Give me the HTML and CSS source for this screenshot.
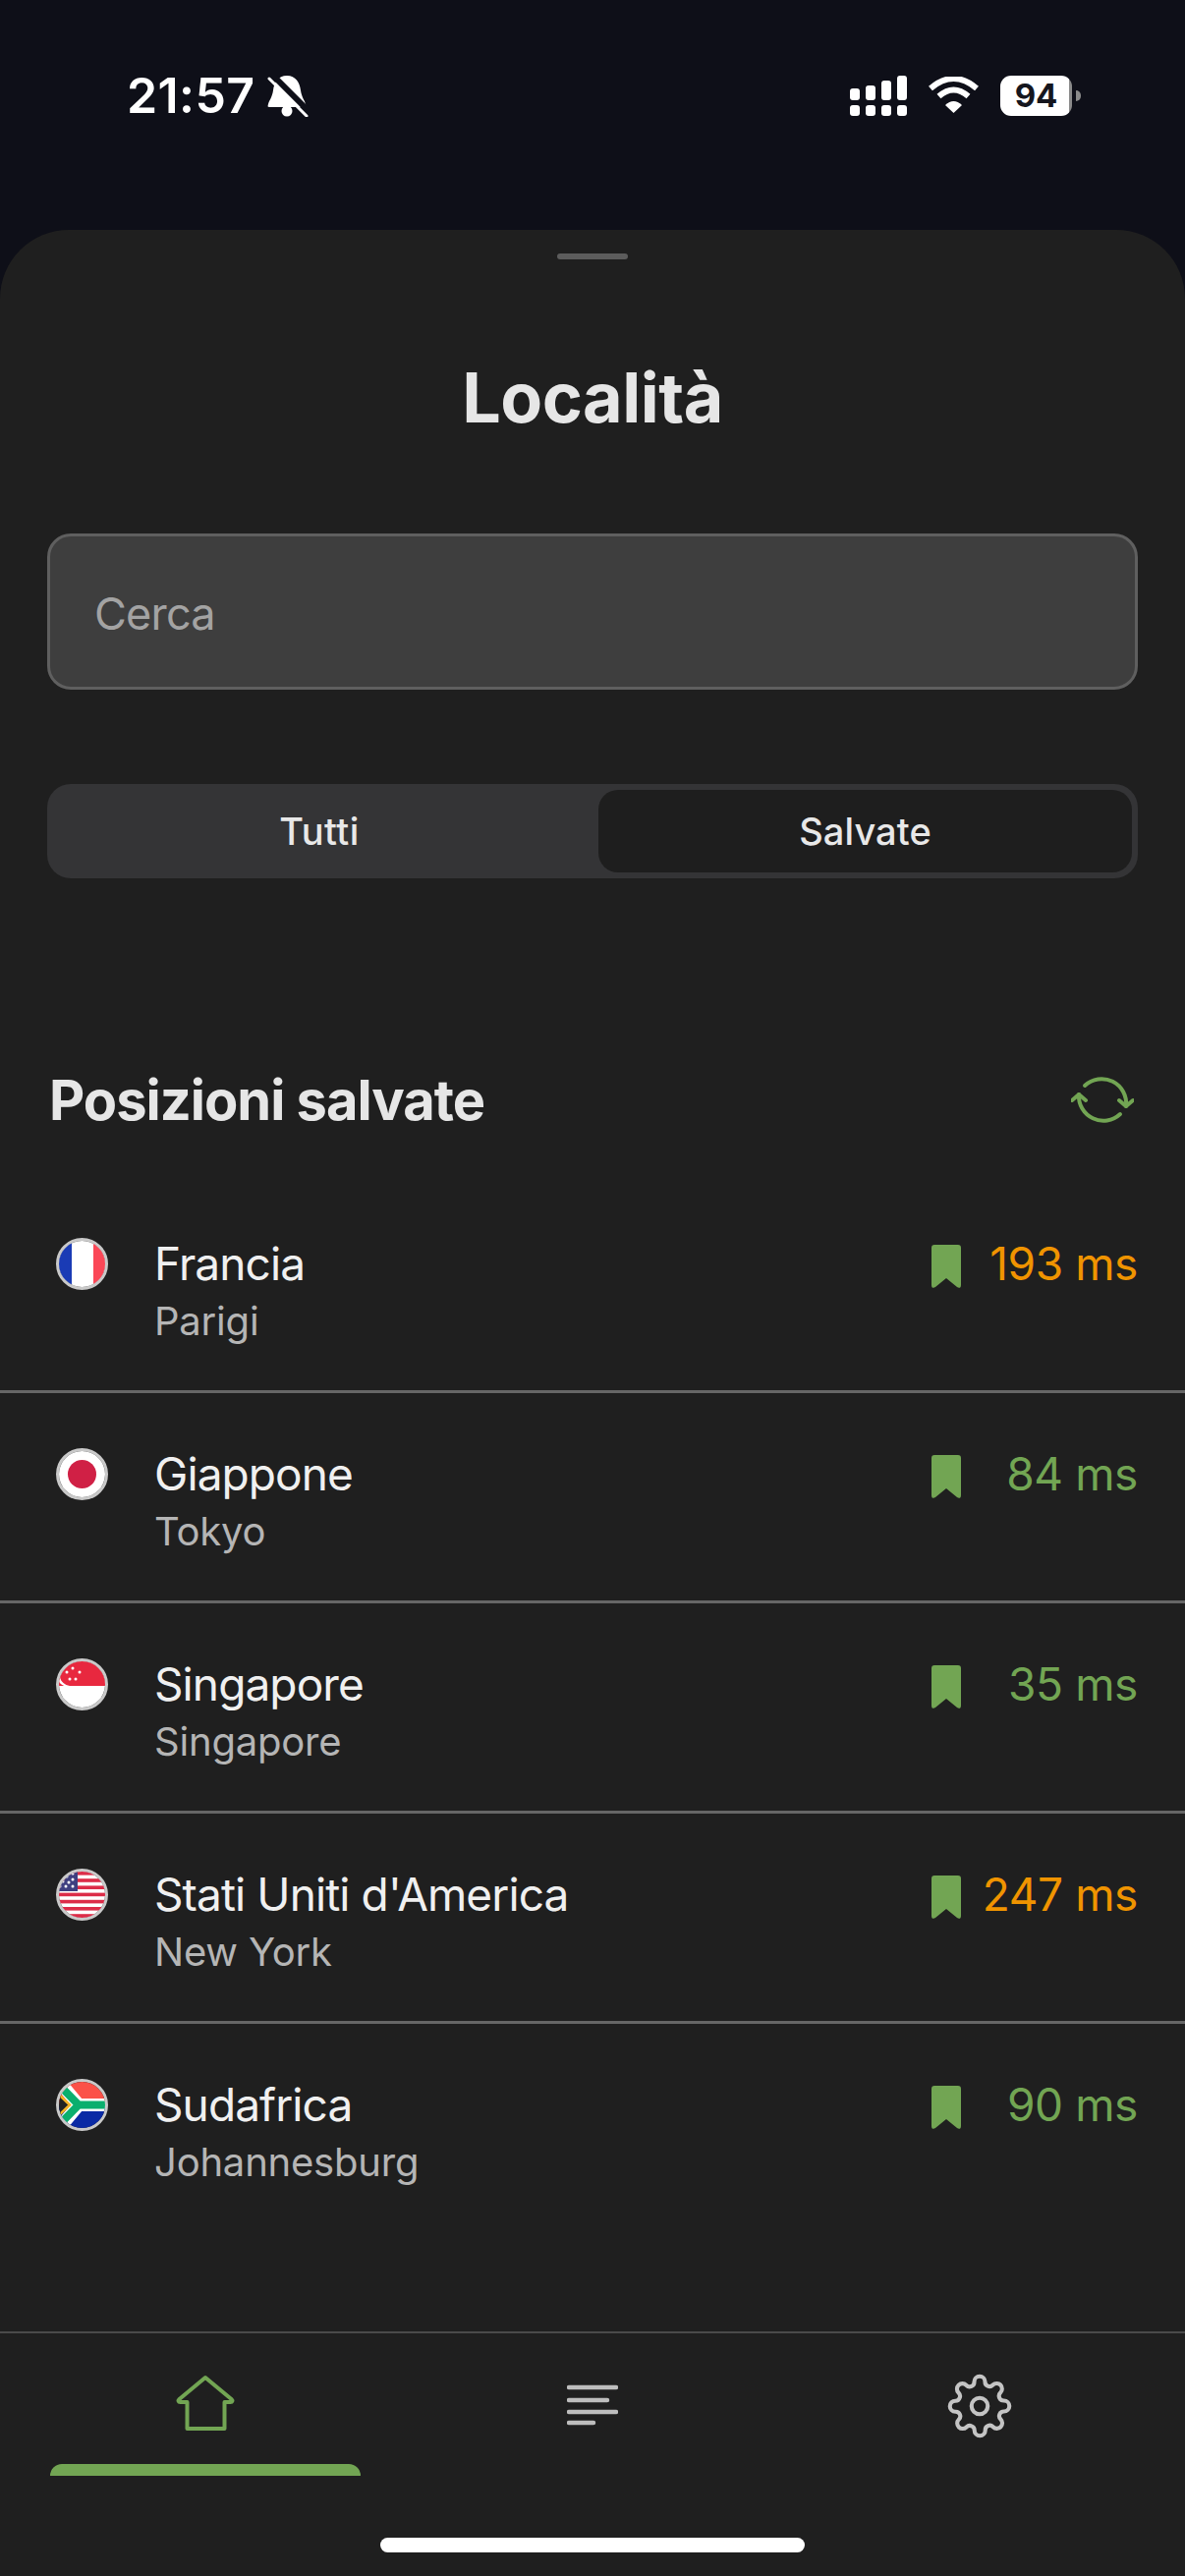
FILE: index.html
```html
<!DOCTYPE html>
<html lang="it">
  <head>
    <meta charset="UTF-8" />
    <title>Località</title>
    <link rel="stylesheet" href="styles.css">
  </head>
  <body>
    <div class="statusBar">
      <div class="statusLeft">
        <span class="time">21:57</span>
        <svg class="bell" viewBox="172 26 42 43">
          <path fill="#fff" d="M192 27c-9 0-13 7-14 15-1 7-4 10-5 14-1 3 0 3 2 3h34c3 0 3 0 2-3-1-4-4-7-5-14-1-8-5-15-14-15z" />
          <circle cx="192" cy="63" r="5.5" fill="#fff" />
          <path stroke="#0e0f18" stroke-width="6" d="M176 25l41 41" />
          <path stroke="#fff" stroke-width="3" stroke-linecap="round" d="M174 30l38 38" />
        </svg>
      </div>
      <div class="statusRight">
        <svg class="signal" viewBox="0 0 58 41" fill="#fff">
          <rect x="0" y="13" width="10" height="12" rx="3" />
          <rect x="16" y="10" width="10" height="15" rx="3" />
          <rect x="32" y="5" width="10" height="20" rx="3" />
          <rect x="48" y="0" width="10" height="25" rx="3" />
          <rect x="0" y="30" width="10" height="11" rx="3" />
          <rect x="16" y="30" width="10" height="11" rx="3" />
          <rect x="32" y="30" width="10" height="11" rx="3" />
          <rect x="48" y="30" width="10" height="11" rx="3" />
        </svg>
        <svg class="wifi" viewBox="105 29 52 38">
          <path fill="none" stroke="#fff" stroke-width="6" d="M107 41Q130.5 21 154 41" />
          <path fill="none" stroke="#fff" stroke-width="6" d="M115.500 49Q130.500 36 145.500 49" />
          <path fill="#fff" d="M122 58Q130.500 50 139 58L130.500 66z" />
        </svg>
        <div class="battery">94</div>
      </div>
    </div>

    <section class="sheet">
      <div class="handle"></div>
      <h1 class="title">Località</h1>
      <div class="search">Cerca</div>
      <div class="segment">
        <div class="segItem">Tutti</div>
        <div class="segItem active">Salvate</div>
      </div>

      <div class="listHead">
        <h2>Posizioni salvate</h2>
        <svg class="refresh" viewBox="30 17 64 64" fill="none" stroke="#72a553" stroke-width="4" stroke-linecap="round" stroke-linejoin="round">
          <path d="M44 34A25 25 0 0 1 86 55" />
          <path d="M79 49L86 55L93 49" />
          <path d="M80 63A25 25 0 0 1 38 43" />
          <path d="M31 49L38 43L45 49" />
        </svg>
      </div>

      <div class="list">
        <div class="row">
          <div class="flag">
            <svg viewBox="0 0 47 47">
              <rect width="47" height="47" fill="#fff" />
              <rect width="13" height="47" fill="#1a3bb5" />
              <rect x="35" width="12" height="47" fill="#fb4757" />
            </svg>
          </div>
          <div class="place">
            <div class="country">Francia</div>
            <div class="city">Parigi</div>
          </div>
          <div class="ping">
            <svg class="mark" viewBox="0 0 30 44"><path d="M3 0h24a3 3 0 0 1 3 3v38c0 3-2 3.500-4 2L15 34 4 43c-2 1.500-4 1-4-2V3a3 3 0 0 1 3-3z" /></svg>
            <span class="ms slow">193 ms</span>
          </div>
        </div>

        <div class="row">
          <div class="flag">
            <svg viewBox="0 0 47 47">
              <rect width="47" height="47" fill="#fff" />
              <circle cx="23.500" cy="23.500" r="14.500" fill="#d02045" />
            </svg>
          </div>
          <div class="place">
            <div class="country">Giappone</div>
            <div class="city">Tokyo</div>
          </div>
          <div class="ping">
            <svg class="mark" viewBox="0 0 30 44"><path d="M3 0h24a3 3 0 0 1 3 3v38c0 3-2 3.500-4 2L15 34 4 43c-2 1.500-4 1-4-2V3a3 3 0 0 1 3-3z" /></svg>
            <span class="ms">84 ms</span>
          </div>
        </div>

        <div class="row">
          <div class="flag">
            <svg viewBox="0 0 47 47">
              <rect width="47" height="47" fill="#fff" />
              <rect width="47" height="25" fill="#e8283f" />
              <path fill="#fff" d="M1 16c1 5 5 8 10 9-5 1-10-1-11-5z" />
              <g fill="#fff">
                <circle cx="8" cy="11" r="1.500" />
                <circle cx="14" cy="7" r="1.500" />
                <circle cx="21" cy="11" r="1.500" />
                <circle cx="11" cy="18" r="1.500" />
                <circle cx="17" cy="18" r="1.500" />
              </g>
            </svg>
          </div>
          <div class="place">
            <div class="country">Singapore</div>
            <div class="city">Singapore</div>
          </div>
          <div class="ping">
            <svg class="mark" viewBox="0 0 30 44"><path d="M3 0h24a3 3 0 0 1 3 3v38c0 3-2 3.500-4 2L15 34 4 43c-2 1.500-4 1-4-2V3a3 3 0 0 1 3-3z" /></svg>
            <span class="ms">35 ms</span>
          </div>
        </div>

        <div class="row">
          <div class="flag">
            <svg viewBox="0 0 47 47">
              <rect width="47" height="47" fill="#fff" />
              <g fill="#dc2c48">
                <rect y="0" width="47" height="3.600" />
                <rect y="7.200" width="47" height="3.600" />
                <rect y="14.400" width="47" height="3.600" />
                <rect y="21.600" width="47" height="3.600" />
                <rect y="28.800" width="47" height="3.600" />
                <rect y="36" width="47" height="3.600" />
                <rect y="43.200" width="47" height="3.800" />
              </g>
              <rect width="19" height="20" fill="#3f3f80" />
              <g fill="#fff">
                <circle cx="14" cy="2" r="1.500" />
                <circle cx="8" cy="5" r="1.500" />
                <circle cx="14" cy="8" r="1.500" />
                <circle cx="4" cy="10" r="1.500" />
                <circle cx="10" cy="11" r="1.500" />
                <circle cx="1" cy="15" r="1.500" />
                <circle cx="7" cy="15" r="1.500" />
                <circle cx="14" cy="15" r="1.500" />
              </g>
            </svg>
          </div>
          <div class="place">
            <div class="country">Stati Uniti d'America</div>
            <div class="city">New York</div>
          </div>
          <div class="ping">
            <svg class="mark" viewBox="0 0 30 44"><path d="M3 0h24a3 3 0 0 1 3 3v38c0 3-2 3.500-4 2L15 34 4 43c-2 1.500-4 1-4-2V3a3 3 0 0 1 3-3z" /></svg>
            <span class="ms slow">247 ms</span>
          </div>
        </div>

        <div class="row">
          <div class="flag">
            <svg viewBox="0 0 47 47">
              <rect width="47" height="24" fill="#fb5148" />
              <rect y="24" width="47" height="23" fill="#0a2aa5" />
              <path fill="none" stroke="#fff" stroke-width="13" d="M3 3L20 23.500H47M3 44L20 23.500" />
              <path fill="none" stroke="#0aaf6e" stroke-width="8" d="M0 3L20 23.500H47M0 44L20 23.500" />
              <path fill="#222" stroke="#f5b324" stroke-width="2.500" d="M-2 11L11 23.500L-2 36z" />
            </svg>
          </div>
          <div class="place">
            <div class="country">Sudafrica</div>
            <div class="city">Johannesburg</div>
          </div>
          <div class="ping">
            <svg class="mark" viewBox="0 0 30 44"><path d="M3 0h24a3 3 0 0 1 3 3v38c0 3-2 3.500-4 2L15 34 4 43c-2 1.500-4 1-4-2V3a3 3 0 0 1 3-3z" /></svg>
            <span class="ms">90 ms</span>
          </div>
        </div>
      </div>

      <nav class="tabs">
        <div class="tab on">
          <svg class="tabIcon" width="60" height="58" viewBox="0 0 60 58" fill="none" stroke="#72a553" stroke-width="4" stroke-linejoin="round">
            <path d="M30 3L3.500 25c-1.500 1.500-1 3 1 3H11.500V55H49.500V28H55.500c2 0 2.500-1.500 1-3z" />
          </svg>
        </div>
        <div class="tab lines">
          <svg class="tabIcon" width="52" height="42" viewBox="0 0 52 42" fill="none" stroke="#bdbdbd" stroke-width="4.500" stroke-linecap="round">
            <path d="M2 3H50M2 16H41M2 28H50M2 39H27" />
          </svg>
        </div>
        <div class="tab">
          <svg class="tabIcon" width="66" height="66" viewBox="0 0 24 24" fill="none" stroke="#c4c4c4" stroke-width="1.500" stroke-linejoin="round">
            <circle cx="12" cy="12" r="3" />
            <path d="M19.4 15a1.65 1.65 0 0 0 .33 1.82l.06.06a2 2 0 0 1 0 2.83 2 2 0 0 1-2.83 0l-.06-.06a1.65 1.65 0 0 0-1.82-.33 1.65 1.65 0 0 0-1 1.51V21a2 2 0 0 1-2 2 2 2 0 0 1-2-2v-.09A1.65 1.65 0 0 0 9 19.4a1.65 1.65 0 0 0-1.82.33l-.06.06a2 2 0 0 1-2.83 0 2 2 0 0 1 0-2.83l.06-.06a1.65 1.65 0 0 0 .33-1.82 1.65 1.65 0 0 0-1.51-1H3a2 2 0 0 1-2-2 2 2 0 0 1 2-2h.09A1.65 1.65 0 0 0 4.600 9a1.65 1.65 0 0 0-.33-1.82l-.06-.06a2 2 0 0 1 0-2.83 2 2 0 0 1 2.830 0l.06.06a1.65 1.65 0 0 0 1.820.33H9a1.65 1.65 0 0 0 1-1.510V3a2 2 0 0 1 2-2 2 2 0 0 1 2 2v.09a1.65 1.65 0 0 0 1 1.510 1.65 1.65 0 0 0 1.820-.33l.06-.06a2 2 0 0 1 2.830 0 2 2 0 0 1 0 2.830l-.06.06a1.65 1.65 0 0 0-.33 1.820V9a1.65 1.65 0 0 0 1.510 1H21a2 2 0 0 1 2 2 2 2 0 0 1-2 2h-.09a1.65 1.65 0 0 0-1.510 1z" />
          </svg>
        </div>
      </nav>
      <div class="homeBar"></div>
    </section>
  </body>
</html>
```

FILE: styles.css
```css
* {
  margin: 0px;
  padding: 0px;
  box-sizing: border-box;
}
body {
  width: 1206px;
  height: 2622px;
  background-color: #0e0f18;
  font-family: Inter, "Noto Sans", sans-serif;
  display: flex;
  flex-direction: column;
  overflow: hidden;
}

/* status bar */
.statusBar {
  height: 234px;
  padding: 0 106px 40px 129px;
  display: flex;
  justify-content: space-between;
  align-items: center;
  color: #fff;
}
.statusLeft {
  display: flex;
  align-items: center;
  gap: 12px;
}
.time {
  font-size: 50px;
  font-weight: 600;
  line-height: 50px;
  letter-spacing: 0.4px;
}
.bell {
  width: 42px;
  height: 43px;
}
.statusRight {
  display: flex;
  align-items: center;
}
.signal {
  width: 58px;
  height: 41px;
  margin-right: 22px;
}
.wifi {
  width: 52px;
  height: 38px;
  margin-right: 21px;
}
.battery {
  position: relative;
  width: 73px;
  height: 41px;
  border-radius: 11px;
  margin-right: 9px;
  background: linear-gradient(90deg, #fff 96%, #8a8a8a 96%);
  color: #15161e;
  font-size: 33px;
  font-weight: 700;
  line-height: 41px;
  text-align: center;
}
.battery::after {
  content: "";
  position: absolute;
  right: -9px;
  top: 15px;
  width: 5px;
  height: 11px;
  border-radius: 0 6px 6px 0;
  background-color: #8a8a8a;
}

/* sheet */
.sheet {
  flex: 1;
  background-color: #1f1f1f;
  border-radius: 70px 70px 0 0;
  padding: 24px 48px 24px;
  display: flex;
  flex-direction: column;
}
.handle {
  width: 72px;
  height: 6px;
  border-radius: 3px;
  background-color: #5c5c5c;
  align-self: center;
}
.title {
  margin-top: 99px;
  font-size: 70px;
  line-height: 84px;
  font-weight: 700;
  letter-spacing: -0.5px;
  color: #e6e6e6;
  text-align: center;
}
.search {
  margin-top: 96px;
  height: 159px;
  padding-left: 45px;
  padding-top: 3px;
  display: flex;
  align-items: center;
  background-color: #3e3e3e;
  border: 3px solid #5f5f5f;
  border-radius: 24px;
  font-size: 45px;
  letter-spacing: -0.8px;
  color: #a3a3a3;
}
.segment {
  margin-top: 96px;
  height: 96px;
  padding: 6px;
  display: flex;
  background-color: #343436;
  border-radius: 24px;
}
.segItem {
  flex: 1;
  display: flex;
  align-items: center;
  justify-content: center;
  padding-right: 13px;
  font-size: 38px;
  font-weight: 500;
  letter-spacing: 0.5px;
  color: #e8e8e8;
  border-radius: 20px;
}
.segItem.active {
  flex: 0 0 543px;
  padding-right: 0;
  letter-spacing: 0.1px;
  background-color: #1e1e1e;
}

/* list */
.listHead {
  margin-top: 186px;
  height: 80px;
  padding-left: 2px;
  display: flex;
  align-items: center;
  justify-content: space-between;
}
.listHead h2 {
  font-size: 56px;
  font-weight: 700;
  letter-spacing: -1px;
  color: #e6e6e6;
}
.refresh {
  width: 64px;
  height: 64px;
  margin-right: 4px;
}
.list {
  flex: 1;
  margin-top: 44px;
  margin-left: -48px;
  margin-right: -48px;
}
.row {
  height: 214px;
  padding: 52px 48px 0 57px;
  display: flex;
  align-items: flex-start;
  border-bottom: 3px solid #666;
}
.row:last-child {
  border-bottom: none;
}
.flag {
  width: 53px;
  height: 53px;
  margin-top: 4px;
  margin-right: 47px;
  border-radius: 50%;
  border: 3px solid #c9c9c9;
  overflow: hidden;
}
.flag svg {
  display: block;
  width: 47px;
  height: 47px;
}
.place {
  flex: 1;
}
.country {
  font-size: 46px;
  line-height: 60px;
  letter-spacing: -0.9px;
  color: #f0f0f0;
}
.city {
  margin-top: 4px;
  font-size: 40px;
  line-height: 50px;
  letter-spacing: -0.2px;
  color: #b5b5b5;
}
.ping {
  display: flex;
  align-items: flex-start;
}
.mark {
  width: 30px;
  height: 44px;
  margin-top: 11px;
  margin-right: 10px;
  fill: #72a553;
}
.ms {
  width: 170px;
  font-size: 46px;
  line-height: 60px;
  letter-spacing: -0.4px;
  text-align: right;
  color: #72a553;
}
.ms.slow {
  color: #f09400;
}

/* bottom nav */
.tabs {
  height: 147px;
  margin-left: -48px;
  margin-right: -48px;
  padding: 0 12px;
  display: grid;
  grid-template-columns: repeat(3, 1fr);
  border-top: 2px solid #4a4a4a;
}
.tab {
  display: flex;
  justify-content: center;
  padding-top: 42px;
}
.tab.lines {
  padding-top: 52px;
}
.tab:nth-child(3) {
  padding-top: 41px;
}
.tab.on {
  position: relative;
}
.tab.on::after {
  content: "";
  position: absolute;
  left: 39px;
  right: 39px;
  bottom: 0;
  height: 12px;
  border-radius: 12px 12px 0 0;
  background-color: #72a553;
}
.tabIcon {
  display: block;
}
.homeBar {
  width: 432px;
  height: 15px;
  margin-top: 63px;
  border-radius: 8px;
  background-color: #fff;
  align-self: center;
}
```
